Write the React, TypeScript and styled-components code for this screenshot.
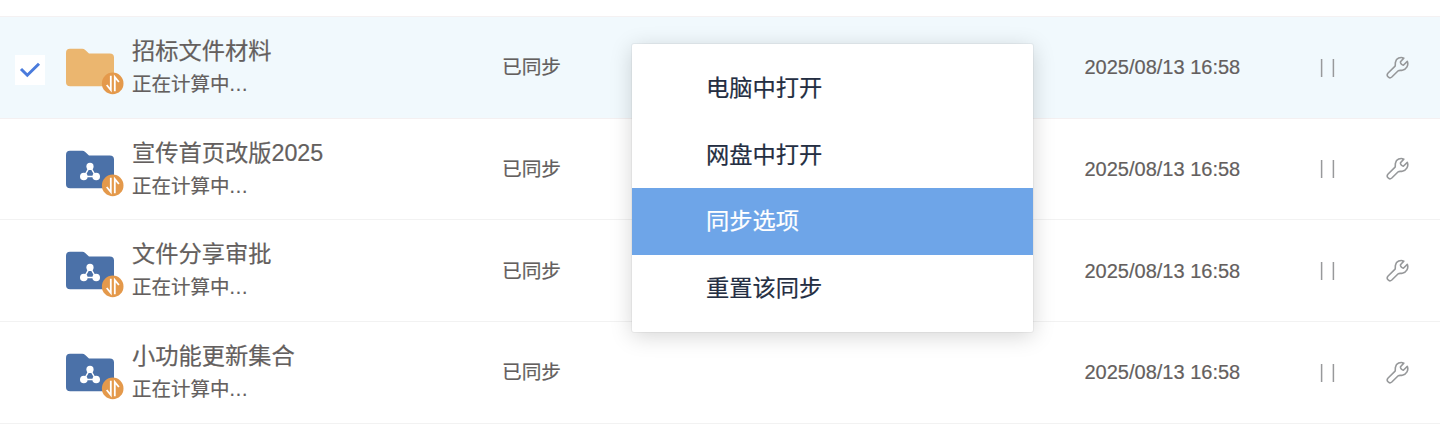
import React from 'react';
import styled, { createGlobalStyle } from 'styled-components';

const GlobalStyle = createGlobalStyle`
  * { box-sizing: border-box; }
  body {
    margin: 0;
    overflow: hidden;
    background: #fff;
    color: #645f5e;
    font-family: "Liberation Sans", "Noto Sans CJK SC", sans-serif;
    -webkit-text-stroke: 0.2px currentColor;
  }
`;

const Page = styled.main`
  position: relative;
  height: 430px;
  padding-top: 16px;
  overflow: hidden;
`;

const List = styled.div`
  border-top: 1px solid #f4f1f2;
`;

const Row = styled.div<{ $selected?: boolean }>`
  display: grid;
  grid-template-columns: 66px 66px 370px 582.5px 217.5px 138px;
  align-items: center;
  height: 101.67px;
  border-bottom: 1.5px solid ${(p) => (p.$selected ? '#f4f0f1' : '#f2f2f2')};
  background: ${(p) => (p.$selected ? '#f1f9fd' : '#fff')};
`;

const CheckCell = styled.div`
  padding-left: 15px;
`;

const Checkbox = styled.span`
  display: block;
  width: 30px;
  height: 30px;
  margin-top: 5px;
  background: #fff;
  svg { display: block; }
`;

const FolderSvg = styled.svg`
  display: block;
  align-self: start;
  margin-top: 29px;
`;

const NameCell = styled.div`
  align-self: start;
  padding-top: 17px;
  white-space: nowrap;
`;

const Name = styled.div`
  font-size: 23.25px;
  line-height: 35px;
`;

const SubText = styled.div`
  font-size: 19.5px;
  line-height: 30px;
`;

const Ellipsis = styled.span`
  letter-spacing: 0.8px;
`;

const Status = styled.div`
  font-size: 19.7px;
  line-height: 30px;
`;

const Time = styled.div`
  font-size: 20px;
  line-height: 30px;
  white-space: nowrap;
`;

const Actions = styled.div`
  display: flex;
  align-items: center;
  gap: 49px;
  padding: 0.5px 0 0 17px;
  svg { display: block; }
`;

const Menu = styled.div`
  position: absolute;
  left: 632px;
  top: 44px;
  width: 401px;
  height: 288px;
  padding-top: 11px;
  border-radius: 2px;
  background: #fff;
  box-shadow: 0 0 0 1px rgba(0, 0, 0, 0.04), 0 4px 22px rgba(0, 0, 0, 0.17);
`;

const MenuItem = styled.div<{ $active?: boolean }>`
  height: 66.67px;
  padding-left: 74px;
  font-size: 23.25px;
  line-height: 67.6px;
  color: ${(p) => (p.$active ? '#fff' : '#242e42')};
  background: ${(p) => (p.$active ? '#6ea5e8' : 'transparent')};
`;

function FolderIcon({ shared }: { shared?: boolean }) {
  return (
    <FolderSvg width="60" height="50" viewBox="0 0 60 50">
      <path
        d="M4 2.8H16.2Q18 2.8 19.2 4L23 7.6H43.8Q48 7.6 48 11.6V36.2Q48 40.3 43.8 40.3H4.2Q0 40.3 0 36.2V7Q0 2.8 4 2.8Z"
        fill={shared ? '#4b71a8' : '#ebb66f'}
      />
      {shared && (
        <g fill="#fff" stroke="#fff">
          <path d="M24 18.2L18.2 28.4H29.8Z" fill="none" strokeWidth="1.5" />
          <circle cx="24" cy="18.4" r="3.6" stroke="none" />
          <circle cx="17.8" cy="28.5" r="3.8" stroke="none" />
          <circle cx="30.2" cy="28.5" r="3.8" stroke="none" />
        </g>
      )}
      <circle cx="46.7" cy="37.4" r="10.8" fill="#e4994b" />
      <path
        d="M44.8 29.8V44L40.7 39M48.8 45.2V31L52.9 36"
        fill="none"
        stroke="#fff"
        strokeWidth="1.8"
      />
    </FolderSvg>
  );
}

function PauseIcon() {
  return (
    <svg width="18" height="20" viewBox="0 0 18 20">
      <path d="M2.6 1V19M14.4 1V19" stroke="#98999b" strokeWidth="1.5" />
    </svg>
  );
}

function WrenchIcon() {
  return (
    <svg width="24" height="24" viewBox="0 0 24 24">
      <path
        d="M17.8 2.1C14.5.5 10.2 2.4 9.5 6C9.1 7.8 9.5 9 9.1 10.1L2.1 17C-.3 19.5 3.1 23.3 5.8 21L12.2 14.8C13.3 14 14.6 14.6 16.3 14.2C20.5 13.3 22.9 9.1 21.3 5.4L17.6 9Q16.7 9.4 15.6 8.3Q14.2 7 14.5 5.8Z"
        fill="none"
        stroke="#96989a"
        strokeWidth="1.6"
        strokeLinejoin="round"
      />
    </svg>
  );
}

const folders = [
  { name: '招标文件材料', selected: true, shared: false },
  { name: '宣传首页改版2025', selected: false, shared: true },
  { name: '文件分享审批', selected: false, shared: true },
  { name: '小功能更新集合', selected: false, shared: true },
];

const menuItems = ['电脑中打开', '网盘中打开', '同步选项', '重置该同步'];

export default function App() {
  return (
    <Page>
      <GlobalStyle />
      <List>
        {folders.map((folder) => (
          <Row key={folder.name} $selected={folder.selected}>
            <CheckCell>
              {folder.selected && (
                <Checkbox>
                  <svg width="30" height="30" viewBox="0 0 30 30">
                    <path d="M6 14L12.3 20.2L24 8.7" fill="none" stroke="#4a7bdc" strokeWidth="3" />
                  </svg>
                </Checkbox>
              )}
            </CheckCell>
            <FolderIcon shared={folder.shared} />
            <NameCell>
              <Name>{folder.name}</Name>
              <SubText>正在计算中<Ellipsis>...</Ellipsis></SubText>
            </NameCell>
            <Status>已同步</Status>
            <Time>2025/08/13 16:58</Time>
            <Actions>
              <PauseIcon />
              <WrenchIcon />
            </Actions>
          </Row>
        ))}
      </List>
      <Menu>
        {menuItems.map((item) => (
          <MenuItem key={item} $active={item === '同步选项'}>{item}</MenuItem>
        ))}
      </Menu>
    </Page>
  );
}
